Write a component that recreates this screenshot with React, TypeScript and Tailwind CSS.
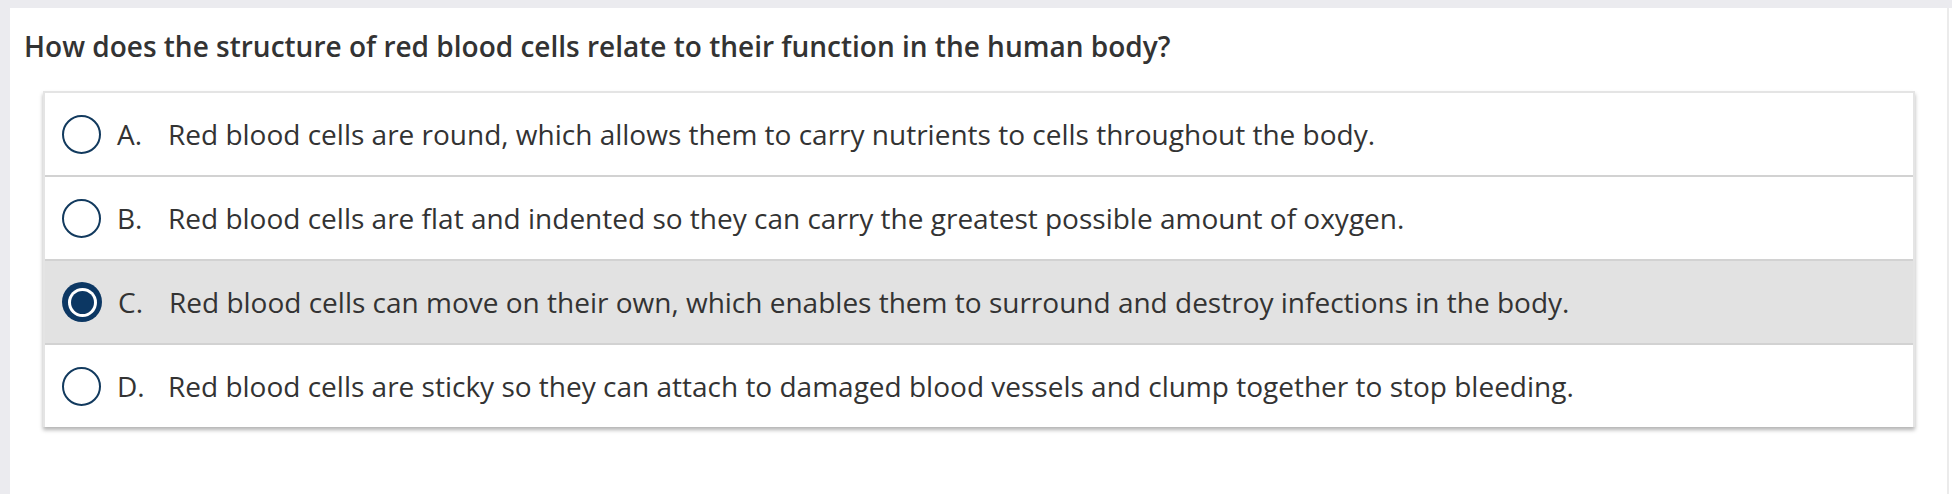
import React, { useState } from "react";

interface AnswerOption {
  letter: string;
  text: string;
}

const options: AnswerOption[] = [
  {
    letter: "A.",
    text: "Red blood cells are round, which allows them to carry nutrients to cells throughout the body.",
  },
  {
    letter: "B.",
    text: "Red blood cells are flat and indented so they can carry the greatest possible amount of oxygen.",
  },
  {
    letter: "C.",
    text: "Red blood cells can move on their own, which enables them to surround and destroy infections in the body.",
  },
  {
    letter: "D.",
    text: "Red blood cells are sticky so they can attach to damaged blood vessels and clump together to stop bleeding.",
  },
];

// Rádiógomb – kiválasztva vastag sötétkék gyűrű + belső pötty
function Radio({ checked }: { checked: boolean }) {
  if (checked) {
    return (
      <span className="flex h-[40px] w-[40px] shrink-0 items-center justify-center rounded-full bg-[#0c3763]">
        <span className="flex h-[29px] w-[29px] items-center justify-center rounded-full bg-white">
          <span className="h-[23px] w-[23px] rounded-full bg-[#0c3763]" />
        </span>
      </span>
    );
  }
  return (
    <span className="h-[39px] w-[39px] shrink-0 rounded-full border-2 border-[#123a5e] bg-white" />
  );
}

export default function App() {
  const [selected, setSelected] = useState<number>(2);

  return (
    <div
      className="min-h-[494px] bg-[#ebebef] pt-[8px] pl-[10px]"
      style={{ fontFamily: '"Open Sans", "Liberation Sans", sans-serif' }}
    >
      <div className="flex min-h-[486px] bg-white">
        <div className="w-[1939px] border-r-2 border-[#ebebeb] pt-[19px]">
          <h1 className="pl-[14px] text-[28px] leading-[38px] font-semibold text-[#333333]">
            How does the structure of red blood cells relate to their function in the human body?
          </h1>
          <div className="mt-[26px] mr-[32px] ml-[33px] border-x-2 border-t-2 border-[#e4e4e4] bg-white shadow-[0_3px_4px_rgba(0,0,0,0.3)]">
            {options.map((opt, index) => (
              <div
                key={opt.letter}
                onClick={() => setSelected(index)}
                className={`flex cursor-pointer items-center pl-[17px] text-[28px] text-[#333333] ${
                  index < options.length - 1
                    ? "h-[84px] border-b-2 border-[#d2d2d2]"
                    : "h-[82px]"
                } ${selected === index ? "bg-[#e2e2e2]" : "bg-white"}`}
              >
                <Radio checked={selected === index} />
                <span className="ml-[16px] w-[51px] shrink-0">{opt.letter}</span>
                <span>{opt.text}</span>
              </div>
            ))}
          </div>
        </div>
      </div>
    </div>
  );
}
